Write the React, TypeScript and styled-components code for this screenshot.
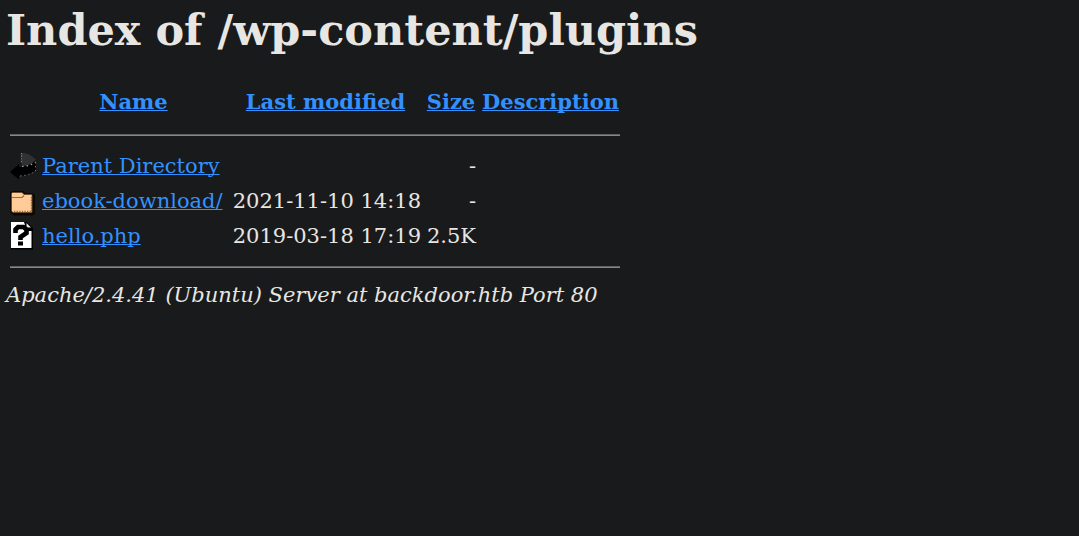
import React from "react";
import styled, { createGlobalStyle } from "styled-components";

const GlobalStyle = createGlobalStyle`
  body {
    margin: 0;
    background: #181a1b;
    color: #e8e6e3;
    font-family: "DejaVu Serif", serif;
    font-size: 21px;
    line-height: 26px;
  }
`;

const Page = styled.main`
  padding: 5px 6px;
`;

const Title = styled.h1`
  margin: 0 0 30px;
  font-size: 43px;
  line-height: 50px;
`;

const Listing = styled.table`
  border-spacing: 3px;
  border-collapse: separate;
`;

const Cell = styled.td<{ $align?: string }>`
  height: 30px;
  padding: 1px;
  text-align: ${(p) => p.$align ?? "left"};
  white-space: nowrap;
`;

const HeadCell = styled(Cell)<{ $width?: number }>`
  min-width: ${(p) => p.$width ?? 0}px;
  vertical-align: top;
`;

const RuleCell = styled.td`
  padding: 1px;
`;

const Rule = styled.hr`
  margin: 10px 0;
  border: 0;
  border-top: 1px solid #5f6162;
  border-bottom: 1px solid #85878a;
`;

const Link = styled.a`
  color: #3391ff;
  text-decoration: underline;
  text-decoration-thickness: 1px;
  text-decoration-skip-ink: none;
  text-underline-offset: 1px;
`;

const Icon = styled.svg`
  display: block;
  width: 27px;
  height: 30px;
`;

const Server = styled.address`
  font-style: italic;
`;

const BackIcon = () => (
  <Icon viewBox="0 0 27 30" role="img" aria-label="Parent directory">
    <path d="M11 2 H15 Q22 4 26 9 V11 L19 14 L12 15Z" fill="#303132" />
    <path d="M0 21 L9 13 V16 Q19 16 26 9 V19 Q19 25 9 25 V28.500Z" fill="#000" />
    <path d="M11.500 2 V12" stroke="#77787a" fill="none" strokeWidth="1.200" strokeDasharray="1.400 1.200" />
    <path d="M12 15.500 Q20 15 26 11" stroke="#a3a3a3" fill="none" strokeWidth="1.200" strokeDasharray="1.500 3" />
    <path d="M10 25 Q20 24 25.500 20 V11" stroke="#77787a" fill="none" strokeDasharray="1.500 2.500" />
  </Icon>
);

const FolderIcon = () => (
  <Icon viewBox="0 0 27 30" role="img" aria-label="Folder">
    <path d="M2 5 H13 L15 7 H23 L25 9 V27.500 L23 29.500 H4 L0 26 V7Z" fill="#0b0805" />
    <path d="M2.500 6.500 H12 L14 8.500 H22 V26.500 H3 L1.500 25 V7.500Z" fill="#ffcc99" stroke="#66451f" strokeWidth=".8" />
    <path d="M2 11.500 H12 L14 9.500" fill="none" stroke="#9a6c3c" strokeWidth="1.200" />
    <path d="M4 25.500 H21" stroke="#996633" strokeWidth="1.500" strokeDasharray="1.300 1.300" />
    <path d="M21.500 11 V26" stroke="#996633" strokeWidth="1.500" strokeDasharray="1.300 1.300" />
  </Icon>
);

const UnknownIcon = () => (
  <Icon viewBox="0 0 27 30" role="img" aria-label="Unknown file">
    <path d="M1 1 H17 L23 7 V28.500 H1Z" fill="#000" />
    <path d="M1 1 H15 V9 H21.500 V27 H1Z" fill="#fff" />
    <path d="M16.500 2 V6.500 H21Z" fill="#e5e5e5" />
    <path d="M14 1 H16 V7 H22 V10 H17Z" fill="#000" />
    <path d="M5.500 12 V8.500 L8 6 H13.500 L16.500 8.500 V12 L10.500 16 V19" fill="none" stroke="#000" strokeWidth="4.600" />
    <rect x="8" y="20.500" width="5" height="4" fill="#000" />
  </Icon>
);

const columns = [
  { label: "Name", width: 183 },
  { label: "Last modified", width: 191 },
  { label: "Size", width: 50 },
  { label: "Description", width: 139 },
];

const entries = [
  { icon: <BackIcon />, name: "Parent Directory", modified: "", size: "-" },
  { icon: <FolderIcon />, name: "ebook-download/", modified: "2021-11-10 14:18", size: "-" },
  { icon: <UnknownIcon />, name: "hello.php", modified: "2019-03-18 17:19", size: "2.5K" },
];

const RuleRow = () => (
  <tr>
    <RuleCell colSpan={5}>
      <Rule />
    </RuleCell>
  </tr>
);

export default function App() {
  return (
    <>
      <GlobalStyle />
      <Page>
        <Title>Index of /wp-content/plugins</Title>
        <Listing>
          <thead>
            <tr>
              <HeadCell />
              {columns.map((c) => (
                <HeadCell as="th" scope="col" key={c.label} $align="center" $width={c.width}>
                  <Link href="#">{c.label}</Link>
                </HeadCell>
              ))}
            </tr>
          </thead>
          <tbody>
            <RuleRow />
            {entries.map((e) => (
              <tr key={e.name}>
                <Cell>{e.icon}</Cell>
                <Cell>
                  <Link href="#">{e.name}</Link>
                </Cell>
                <Cell $align="right">{e.modified}</Cell>
                <Cell $align="right">{e.size}</Cell>
                <Cell />
              </tr>
            ))}
            <RuleRow />
          </tbody>
        </Listing>
        <Server>Apache/2.4.41 (Ubuntu) Server at backdoor.htb Port 80</Server>
      </Page>
    </>
  );
}
